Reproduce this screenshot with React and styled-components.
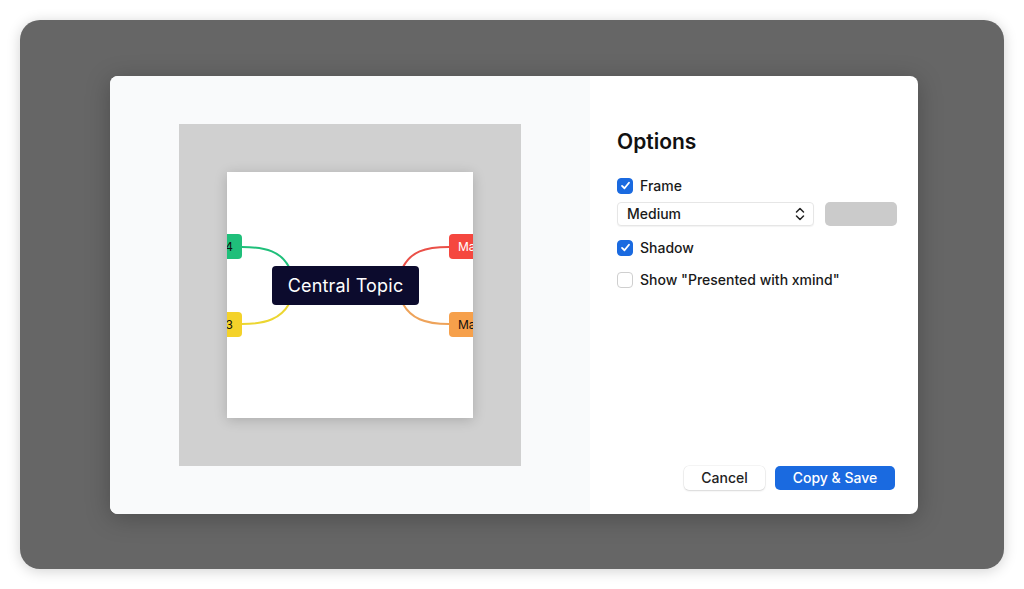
import styled, { createGlobalStyle } from "styled-components";

const GlobalStyle = createGlobalStyle`
  html, body {
    margin: 0;
    padding: 0;
    background: #ffffff;
    font-family: "Inter", "Noto Sans", sans-serif;
  }
  * { box-sizing: border-box; }
`;

const COLORS = {
  FRAME: "#666666",
  PANEL: "#f9fafb",
  PAPER: "#d0d0d0",
  BLUE: "#1a6ae0",
  TEXT: "#111111",
  CENTRAL: "#0c0b2d",
};

const Page = styled.div`
  width: 1024px;
  height: 589px;
  padding: 20px;
`;

const Frame = styled.div`
  width: 100%;
  height: 100%;
  background: ${COLORS.FRAME};
  border-radius: 20px;
  box-shadow: 0 2px 14px rgba(0, 0, 0, 0.18);
  display: flex;
  align-items: center;
  justify-content: center;
  padding-left: 4px;
`;

const Dialog = styled.div`
  width: 808px;
  height: 438px;
  background: #ffffff;
  border-radius: 8px;
  overflow: hidden;
  display: flex;
  box-shadow: 0 4px 24px rgba(0, 0, 0, 0.25);
`;

const PreviewPane = styled.div`
  width: 480px;
  background: ${COLORS.PANEL};
  display: flex;
  align-items: center;
  justify-content: center;
`;

const Paper = styled.div`
  width: 342px;
  height: 342px;
  background: ${COLORS.PAPER};
  display: flex;
  align-items: center;
  justify-content: center;
`;

const Card = styled.div`
  position: relative;
  width: 246px;
  height: 246px;
  background: #ffffff;
  overflow: hidden;
  box-shadow: 0 2px 12px rgba(0, 0, 0, 0.18);
`;

const Lines = styled.svg`
  position: absolute;
  left: 0;
  top: 0;
`;

const CentralTopic = styled.div`
  position: absolute;
  left: 45px;
  top: 94px;
  width: 147px;
  height: 39px;
  border-radius: 4px;
  background: ${COLORS.CENTRAL};
  color: #ffffff;
  font-size: 18px;
  display: flex;
  align-items: center;
  justify-content: center;
  letter-spacing: 0.2px;
`;

const Branch = styled.div`
  position: absolute;
  top: ${(p) => p.top}px;
  left: ${(p) => p.left}px;
  width: 52px;
  height: 25px;
  border-radius: 4px;
  background: ${(p) => p.bg};
  color: ${(p) => p.fg};
  font-size: 12px;
  display: flex;
  align-items: center;
  justify-content: ${(p) => (p.side === "left" ? "flex-end" : "flex-start")};
  padding: 0 9px;
`;

const OptionsPane = styled.div`
  flex: 1;
  display: flex;
  flex-direction: column;
  padding: 53px 23px 24px 27px;
  color: ${COLORS.TEXT};
`;

const Title = styled.h2`
  margin: 0 0 22px;
  font-size: 21px;
  font-weight: 600;
  color: #111;
`;

const CheckRow = styled.label`
  display: flex;
  align-items: center;
  gap: 7px;
  height: 20px;
  font-size: 14px;
  font-weight: 500;
  color: #1a1a1a;
  margin-bottom: ${(p) => p.mb || 0}px;
`;

const Box = styled.span`
  width: 16px;
  height: 16px;
  border-radius: 4px;
  display: flex;
  align-items: center;
  justify-content: center;
  background: ${(p) => (p.checked ? COLORS.BLUE : "#ffffff")};
  border: 1px solid ${(p) => (p.checked ? COLORS.BLUE : "#cfcfcf")};
`;

const SelectRow = styled.div`
  display: flex;
  gap: 11px;
  margin-bottom: 12px;
  margin-right: -2px;
`;

const Select = styled.div`
  width: 197px;
  height: 24px;
  border: 1px solid #e6e6e6;
  border-radius: 4px;
  background: #fff;
  box-shadow: 0 1px 1px rgba(0, 0, 0, 0.05);
  display: flex;
  align-items: center;
  justify-content: space-between;
  padding: 0 8px 0 9px;
  font-size: 14px;
  font-weight: 500;
  color: #1a1a1a;
`;

const Swatch = styled.div`
  width: 72px;
  height: 24px;
  border-radius: 5px;
  background: #cbcbcb;
`;

const Spacer = styled.div`
  flex: 1;
`;

const Actions = styled.div`
  display: flex;
  justify-content: flex-end;
  gap: 10px;
`;

const Button = styled.button`
  height: 24px;
  width: ${(p) => p.w}px;
  border-radius: 5px;
  font-family: inherit;
  font-size: 14px;
  font-weight: 500;
  border: none;
  cursor: pointer;
  background: ${(p) => (p.primary ? COLORS.BLUE : "#ffffff")};
  color: ${(p) => (p.primary ? "#ffffff" : "#222")};
  box-shadow: ${(p) =>
    p.primary ? "none" : "0 0 0 0.5px rgba(0,0,0,0.08), 0 1px 2px rgba(0,0,0,0.12)"};
`;

const Check = () => (
  <svg width="11" height="11" viewBox="0 0 12 12" fill="none">
    <path d="M2.2 6.4 L4.9 9 L9.8 3" stroke="#fff" strokeWidth="2" strokeLinecap="round" strokeLinejoin="round" />
  </svg>
);

const Chevrons = () => (
  <svg width="10" height="16" viewBox="0 0 10 16" fill="none">
    <path d="M1.5 6 L5 2.5 L8.5 6 M1.5 10 L5 13.5 L8.5 10" stroke="#222" strokeWidth="1.5" strokeLinecap="round" strokeLinejoin="round" />
  </svg>
);

const MindMap = () => (
  <Card>
    <Lines width="246" height="246" viewBox="0 0 246 246" fill="none">
      <path d="M15 75 C40 75 54 80 62 95" stroke="#1fbf7a" strokeWidth="2" />
      <path d="M15 152 C40 152 54 146 62 132" stroke="#ecd631" strokeWidth="2" />
      <path d="M222 75 C197 75 184 80 176 95" stroke="#ea5048" strokeWidth="2" />
      <path d="M222 152 C197 152 184 146 176 132" stroke="#eea35a" strokeWidth="2" />
    </Lines>
    <Branch side="left" left={-37} top={62} bg="#1fbf7a" fg="#111">4</Branch>
    <Branch side="left" left={-37} top={140} bg="#f4d22a" fg="#111">3</Branch>
    <Branch side="right" left={222} top={62} bg="#f5473f" fg="#fff">Ma</Branch>
    <Branch side="right" left={222} top={140} bg="#f6a04b" fg="#111">Ma</Branch>
    <CentralTopic>Central Topic</CentralTopic>
  </Card>
);

const App = () => (
  <>
    <GlobalStyle />
    <Page>
      <Frame>
        <Dialog>
          <PreviewPane>
            <Paper>
              <MindMap />
            </Paper>
          </PreviewPane>
          <OptionsPane>
            <Title>Options</Title>
            <CheckRow mb={6}>
              <Box checked><Check /></Box>
              Frame
            </CheckRow>
            <SelectRow>
              <Select>
                Medium
                <Chevrons />
              </Select>
              <Swatch />
            </SelectRow>
            <CheckRow mb={12}>
              <Box checked><Check /></Box>
              Shadow
            </CheckRow>
            <CheckRow>
              <Box />
              Show "Presented with xmind"
            </CheckRow>
            <Spacer />
            <Actions>
              <Button w={81}>Cancel</Button>
              <Button primary w={120}>Copy &amp; Save</Button>
            </Actions>
          </OptionsPane>
        </Dialog>
      </Frame>
    </Page>
  </>
);

export default App;
